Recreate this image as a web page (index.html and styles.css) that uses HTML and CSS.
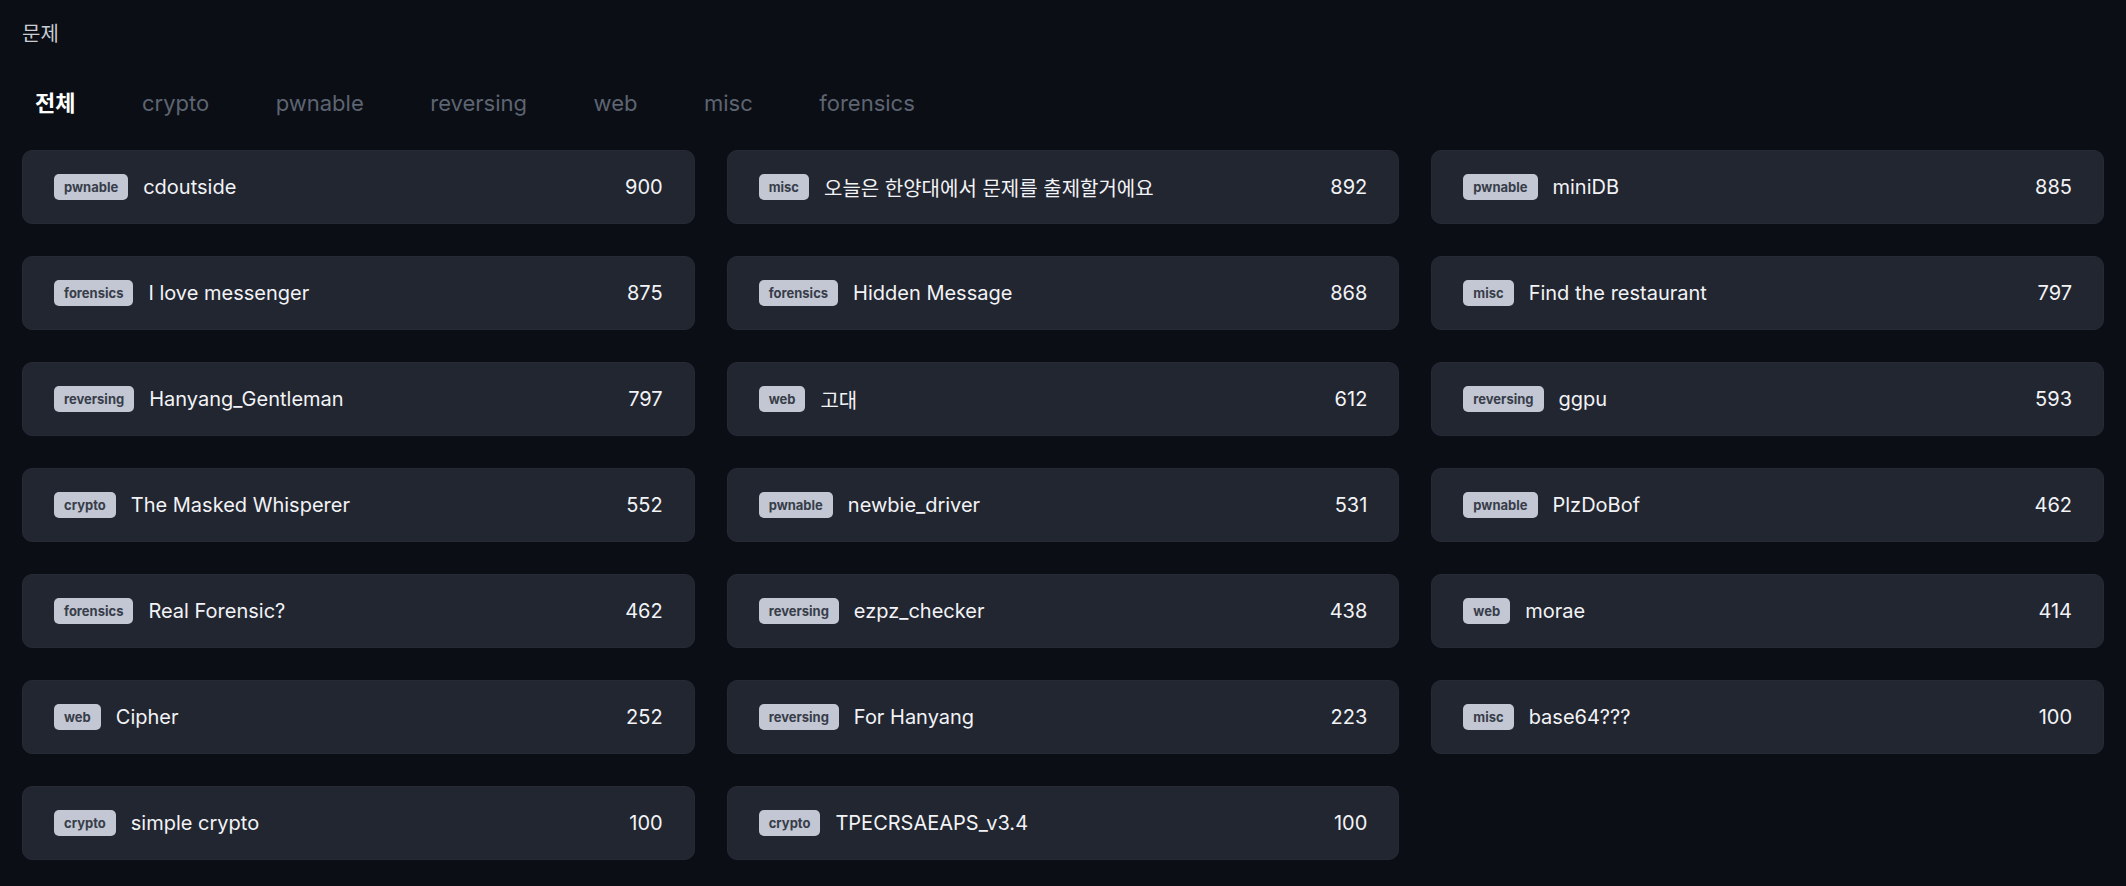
FILE: index.html
```html
<!DOCTYPE html>
<html lang="ko">
<head>
<meta charset="utf-8">
<title>문제</title>
<link rel="stylesheet" href="styles.css">
</head>
<body>
<main class="page">
  <h1 class="page-title">문제</h1>
  <nav class="tabs">
    <span class="tab active">전체</span>
    <span class="tab">crypto</span>
    <span class="tab">pwnable</span>
    <span class="tab">reversing</span>
    <span class="tab">web</span>
    <span class="tab">misc</span>
    <span class="tab">forensics</span>
  </nav>
  <section class="grid">
    <div class="card"><span class="badge">pwnable</span><span class="name">cdoutside</span><span class="score">900</span></div>
    <div class="card"><span class="badge">misc</span><span class="name">오늘은 한양대에서 문제를 출제할거에요</span><span class="score">892</span></div>
    <div class="card"><span class="badge">pwnable</span><span class="name">miniDB</span><span class="score">885</span></div>

    <div class="card"><span class="badge">forensics</span><span class="name">I love messenger</span><span class="score">875</span></div>
    <div class="card"><span class="badge">forensics</span><span class="name">Hidden Message</span><span class="score">868</span></div>
    <div class="card"><span class="badge">misc</span><span class="name">Find the restaurant</span><span class="score">797</span></div>

    <div class="card"><span class="badge">reversing</span><span class="name">Hanyang_Gentleman</span><span class="score">797</span></div>
    <div class="card"><span class="badge">web</span><span class="name">고대</span><span class="score">612</span></div>
    <div class="card"><span class="badge">reversing</span><span class="name">ggpu</span><span class="score">593</span></div>

    <div class="card"><span class="badge">crypto</span><span class="name">The Masked Whisperer</span><span class="score">552</span></div>
    <div class="card"><span class="badge">pwnable</span><span class="name">newbie_driver</span><span class="score">531</span></div>
    <div class="card"><span class="badge">pwnable</span><span class="name">PlzDoBof</span><span class="score">462</span></div>

    <div class="card"><span class="badge">forensics</span><span class="name">Real Forensic?</span><span class="score">462</span></div>
    <div class="card"><span class="badge">reversing</span><span class="name">ezpz_checker</span><span class="score">438</span></div>
    <div class="card"><span class="badge">web</span><span class="name">morae</span><span class="score">414</span></div>

    <div class="card"><span class="badge">web</span><span class="name">Cipher</span><span class="score">252</span></div>
    <div class="card"><span class="badge">reversing</span><span class="name">For Hanyang</span><span class="score">223</span></div>
    <div class="card"><span class="badge">misc</span><span class="name">base64???</span><span class="score">100</span></div>

    <div class="card"><span class="badge">crypto</span><span class="name">simple crypto</span><span class="score">100</span></div>
    <div class="card"><span class="badge">crypto</span><span class="name">TPECRSAEAPS_v3.4</span><span class="score">100</span></div>
  </section>
</main>
</body>
</html>
```

FILE: styles.css
```css
html, body {
  margin: 0;
  padding: 0;
  background: #0b0e15;
}
body {
  font-family: Inter, "Noto Sans CJK KR", sans-serif;
  color: #eef0f4;
}
.page {
  padding: 20px 22px 0 22px;
}
.page-title {
  margin: 0;
  font-size: 20px;
  line-height: 28px;
  font-weight: 400;
  color: #c9ccd3;
}
.tabs {
  display: flex;
  gap: 66.5px;
  padding: 0 13px;
  margin-top: 39px;
}
.tab {
  font-size: 22px;
  line-height: 32px;
  color: #5d6472;
  font-weight: 400;
}
.tab.active {
  color: #ffffff;
  font-weight: 700;
}
.grid {
  margin-top: 31px;
  display: grid;
  grid-template-columns: repeat(3, 1fr);
  column-gap: 32px;
  row-gap: 32px;
}
.card {
  height: 74px;
  box-sizing: border-box;
  display: flex;
  align-items: center;
  padding: 0 31px;
  background: #222631;
  border: 1px solid #262a35;
  border-radius: 10px;
}
.badge {
  flex: none;
  height: 26px;
  line-height: 26px;
  padding: 0 10px;
  border-radius: 5px;
  background: #c2c7d3;
  color: #383d4a;
  font-size: 13px;
  font-weight: 700;
}
.name {
  flex: 1;
  margin-left: 15px;
  font-size: 20px;
  color: #f2f3f6;
  white-space: nowrap;
}
.score {
  flex: none;
  font-size: 20px;
  color: #f2f3f6;
}
```
